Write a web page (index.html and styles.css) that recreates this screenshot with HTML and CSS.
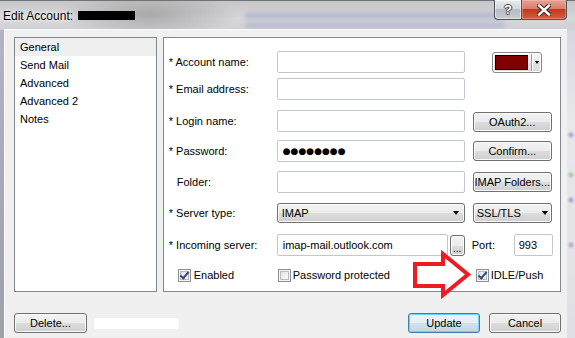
FILE: index.html
```html
<!DOCTYPE html>
<html lang="en">
<head>
    <meta charset="UTF-8">
    <meta name="viewport" content="width=device-width, initial-scale=1.0">
    <title>Edit Account</title>
    <link rel="stylesheet" href="styles.css">
</head>
<body>

    <div class="window">
        <!-- Glass title bar -->
        <div class="titlebar">
            <div class="glass-blur"></div>
            <span class="title">Edit Account:</span>
            <span class="redact-black"></span>
            <div class="caption-buttons">
                <span class="cap-btn help">?</span>
                <span class="cap-btn close">
                    <svg width="14" height="12" viewBox="0 0 14 12">
                        <path d="M2 1.5 L12 10.5 M12 1.5 L2 10.5" stroke="#3a2420" stroke-width="4.4" stroke-linecap="square"/>
                        <path d="M2 1.5 L12 10.5 M12 1.5 L2 10.5" stroke="#fff" stroke-width="2.4" stroke-linecap="square"/>
                    </svg>
                </span>
            </div>
        </div>

        <div class="frame">
            <div class="frame-left"></div>

            <div class="client">
                <div class="main">
                    <!-- Page list -->
                    <ul class="nav-list">
                        <li class="selected">General</li>
                        <li>Send Mail</li>
                        <li>Advanced</li>
                        <li>Advanced 2</li>
                        <li>Notes</li>
                    </ul>

                    <!-- General page -->
                    <div class="panel">
                        <div class="row">
                            <span class="label">* Account name:</span>
                            <input class="field" type="text">
                            <div class="color-btn">
                                <span class="swatch"></span>
                                <span class="color-sep"></span>
                                <span class="caret small"></span>
                            </div>
                        </div>
                        <div class="row tight">
                            <span class="label">* Email address:</span>
                            <input class="field" type="text">
                        </div>
                        <div class="row">
                            <span class="label">* Login name:</span>
                            <input class="field" type="text">
                            <button class="btn side-btn oauth">OAuth2...</button>
                        </div>
                        <div class="row">
                            <span class="label">* Password:</span>
                            <div class="field"><span class="dots">●●●●●●●●</span></div>
                            <button class="btn side-btn">Confirm...</button>
                        </div>
                        <div class="row">
                            <span class="label plain">Folder:</span>
                            <input class="field" type="text">
                            <button class="btn side-btn">IMAP Folders...</button>
                        </div>
                        <div class="row">
                            <span class="label">* Server type:</span>
                            <div class="btn combo"><span>IMAP</span><span class="caret"></span></div>
                            <div class="btn combo small-combo"><span>SSL/TLS</span><span class="caret"></span></div>
                        </div>
                        <div class="row loose">
                            <span class="label">* Incoming server:</span>
                            <div class="field-combo">
                                <input class="field" type="text" value="imap-mail.outlook.com">
                                <button class="btn browse">...</button>
                            </div>
                            <div class="port-cell">
                                <span class="label">Port:</span>
                                <input class="field port" type="text" value="993">
                            </div>
                        </div>
                        <div class="row checks">
                            <label class="check-item enabled"><span class="checkbox checked"></span>Enabled</label>
                            <label class="check-item protect"><span class="checkbox"></span>Password protected</label>
                            <label class="check-item idle"><span class="checkbox checked"></span>IDLE/Push</label>
                        </div>
                    </div>
                </div>

                <div class="footer">
                    <button class="btn foot-btn">Delete...</button>
                    <span class="redact-white"></span>
                    <div class="footer-right">
                        <button class="btn foot-btn default">Update</button>
                        <button class="btn foot-btn">Cancel</button>
                    </div>
                </div>

                <!-- Red callout arrow drawn over the dialog -->
                <svg class="callout-arrow" width="80" height="60" viewBox="0 0 80 60">
                    <polygon points="10,19 38,19 38,9 63,29.5 38,50 38,41 10,41" fill="none" stroke="#ed1c24" stroke-width="4"/>
                </svg>
            </div>

            <div class="frame-right"></div>
        </div>
    </div>

</body>
</html>
```

FILE: styles.css
```css
body {
    margin: 0;
    width: 575px;
    height: 338px;
    overflow: hidden;
    font-family: "Liberation Sans", Arial, sans-serif;
    font-size: 11px;
    color: #000;
}

.window {
    display: flex;
    flex-direction: column;
    height: 338px;
    background: linear-gradient(to right, #b9b8c6, #c9c9cf 30%, #c3c4ca 60%, #d3d4da);
}

/* Title bar */
.titlebar {
    position: relative;
    height: 30px;
    display: flex;
    align-items: center;
    padding-left: 3px;
    background:
        radial-gradient(ellipse 90px 22px at 150px 14px, rgba(140, 140, 140, 0.6), transparent),
        linear-gradient(to bottom, #c6c6c8, #d7d7da 60%, #cfd0d4);
    border-top: 1px solid #6f7276;
    box-sizing: border-box;
}

.glass-blur {
    position: absolute;
    left: 245px;
    top: 8px;
    width: 260px;
    height: 22px;
    background:
        linear-gradient(to bottom, transparent 10%, rgba(90, 100, 190, 0.35) 30%, transparent 50%, rgba(90, 100, 190, 0.25) 75%, transparent 95%);
    filter: blur(2px);
}

.title {
    position: relative;
    font-size: 12px;
    text-shadow: 0 0 6px #fff, 0 0 3px #fff;
}

.redact-black {
    position: relative;
    width: 57px;
    height: 9px;
    margin-left: 5px;
    background: #000;
}

.caption-buttons {
    position: relative;
    display: flex;
    margin-left: auto;
    margin-right: 8px;
    align-self: flex-start;
    margin-top: -1px;
}

.cap-btn {
    display: flex;
    justify-content: center;
    align-items: center;
    height: 20px;
    box-sizing: border-box;
    border: 1px solid #4c525a;
    border-top: none;
}

.help {
    width: 28px;
    border-radius: 0 0 0 4px;
    background: linear-gradient(to bottom, #e9ecf0, #d2d6dc 45%, #b5bbc4 50%, #c7ccd3);
    box-shadow: inset 0 0 0 1px rgba(255, 255, 255, 0.5);
    color: #fff;
    font-weight: bold;
    font-size: 13px;
    text-shadow: 1px 0 0 #3c4048, -1px 0 0 #3c4048, 0 1px 0 #3c4048, 0 -1px 0 #3c4048;
}

.close {
    width: 45px;
    border-left: none;
    border-radius: 0 0 4px 0;
    background: linear-gradient(to bottom, #e6a394, #d87e6b 45%, #c2391e 50%, #d25c40);
    box-shadow: inset 0 0 0 1px rgba(255, 200, 190, 0.4);
}

/* Frame and client area */
.frame {
    display: flex;
    flex: 1;
}

.frame-left {
    width: 4px;
    background: linear-gradient(to bottom, #b3b3c6, #a2a4b4 70%, #9ea3a8);
}

.frame-right {
    width: 8px;
    background:
        radial-gradient(circle 4px at 4px 105px, #a39ad0, transparent),
        radial-gradient(circle 4px at 4px 145px, #9bc59b, transparent),
        radial-gradient(circle 4px at 4px 170px, #9f98cc, transparent),
        radial-gradient(circle 4px at 4px 215px, #c199c8, transparent),
        linear-gradient(to bottom, #d8d6e0, #e8e8ec 30%, #e0e0e4);
}

.client {
    position: relative;
    width: 563px;
    box-sizing: border-box;
    padding: 7px 6px 0 9px;
    background: #f0f0f0;
    border-top: 1px solid #fbfbfb;
    border-left: 1px solid #fbfbfb;
    margin-top: -1px;
}

.main {
    display: flex;
    gap: 6px;
}

/* Page list */
.nav-list {
    list-style: none;
    margin: 0;
    padding: 0;
    width: 143px;
    height: 255px;
    box-sizing: border-box;
    border: 1px solid #828790;
    background: #fff;
}

.nav-list li {
    height: 18px;
    line-height: 18px;
    padding-left: 5px;
}

.nav-list li.selected {
    background: #efefef;
}

/* Settings panel */
.panel {
    width: 399px;
    height: 255px;
    box-sizing: border-box;
    border: 1px solid #828790;
    background: #fff;
    padding: 13px 0 0 5px;
}

.row {
    display: grid;
    grid-template-columns: 100px 188px 80px;
    column-gap: 8px;
    align-items: center;
    height: 22px;
    margin-top: 9px;
}

.row:first-child {
    margin-top: 0;
}

.row.tight {
    margin-top: 5px;
}

.row.loose {
    margin-top: 10px;
}

.label {
    white-space: nowrap;
}

.label.plain {
    padding-left: 8px;
}

.field {
    display: flex;
    align-items: center;
    width: 100%;
    height: 22px;
    box-sizing: border-box;
    margin: 0;
    padding: 0 5px;
    border: 1px solid #c3c7cd;
    border-radius: 2px;
    background: #fff;
    font-family: "Liberation Sans", Arial, sans-serif;
    font-size: 11px;
    color: #000;
    outline: none;
}

.dots {
    font-family: "DejaVu Sans", sans-serif;
    font-size: 9px;
    margin-top: -1px;
}

/* Buttons */
.btn {
    box-sizing: border-box;
    margin: 0;
    padding: 0;
    border: 1px solid #707070;
    border-radius: 3px;
    background: linear-gradient(to bottom, #f3f3f3, #ebebeb 50%, #dddddd 50%, #cfcfcf);
    box-shadow: inset 0 0 0 1px #fbfbfb;
    font-family: "Liberation Sans", Arial, sans-serif;
    font-size: 11px;
    color: #000;
}

.side-btn {
    width: 79px;
    height: 20px;
}

.oauth {
    margin-top: 3px;
}

.combo {
    display: flex;
    align-items: center;
    justify-content: space-between;
    height: 20px;
    padding: 0 5px 0 4px;
}

.small-combo {
    width: 79px;
    padding: 0 3px 0 3px;
}

.caret {
    width: 0;
    height: 0;
    border-left: 3px solid transparent;
    border-right: 3px solid transparent;
    border-top: 4px solid #000;
}

.caret.small {
    border-left-width: 2.5px;
    border-right-width: 2.5px;
    border-top-width: 3px;
}

.color-btn {
    display: flex;
    align-items: center;
    width: 50px;
    height: 21px;
    margin-left: 19px;
    box-sizing: border-box;
    border: 1px solid #8a8a8a;
    border-radius: 3px;
    background: linear-gradient(to bottom, #f7f7f7, #ececec 50%, #e2e2e2 50%, #dadada);
    box-shadow: inset 0 0 0 1px #fdfdfd;
}

.swatch {
    width: 33px;
    height: 15px;
    box-sizing: border-box;
    margin-left: 2px;
    border: 1px solid #000;
    background: #800000;
}

.color-sep {
    width: 1px;
    height: 17px;
    margin-left: 3px;
    margin-right: 3px;
    background: #9c9c9c;
    box-shadow: 1px 0 0 #fff;
}

.field-combo {
    display: flex;
    align-items: center;
    gap: 2px;
}

.field-combo .field {
    flex: 1;
    padding-left: 5px;
}

.browse {
    width: 15px;
    height: 21px;
    flex: none;
    font-size: 10px;
    line-height: 26px;
}

.port-cell {
    display: flex;
    align-items: center;
    justify-content: space-between;
    margin-left: -1px;
}

.port {
    width: 39px;
    padding-left: 4px;
}

/* Checkboxes */
.row.checks {
    height: 14px;
    margin-top: 12px;
}

.check-item {
    display: flex;
    align-items: center;
    gap: 3px;
    white-space: nowrap;
}

.enabled {
    margin-left: 9px;
}

.protect {
    margin-left: 1px;
    gap: 2px;
}

.idle {
    margin-left: 3px;
    gap: 2px;
}

.checkbox {
    position: relative;
    width: 13px;
    height: 13px;
    box-sizing: border-box;
    border: 1px solid #8e8f8f;
    background: linear-gradient(135deg, #d8d8d8, #f4f4f4 60%, #fefefe);
    box-shadow: inset 0 0 0 1px #f6f6f6, inset 0 0 0 2px #b8bcc2;
}

.checkbox.checked::after {
    content: "";
    position: absolute;
    left: 3px;
    top: 0px;
    width: 3px;
    height: 7px;
    border-right: 2px solid #304a7c;
    border-bottom: 2px solid #304a7c;
    transform: rotate(40deg);
}

/* Footer */
.footer {
    display: flex;
    align-items: center;
    margin-top: 21px;
}

.foot-btn {
    width: 73px;
    height: 20px;
}

.redact-white {
    width: 85px;
    height: 11px;
    margin-left: 7px;
    margin-top: 1px;
    background: #fff;
    border-radius: 3px;
    filter: blur(0.6px);
}

.footer-right {
    display: flex;
    gap: 9px;
    margin-left: auto;
}

.footer-right .foot-btn {
    width: 72px;
}

.foot-btn.default {
    border-color: #3c7fb1;
    background: linear-gradient(to bottom, #eef5f9, #e3edf3 50%, #d3e1ea 50%, #c6d6e2);
    box-shadow: inset 0 0 0 1px #6fd0f5;
}

/* Callout arrow */
.callout-arrow {
    position: absolute;
    left: 400px;
    top: 215px;
    overflow: visible;
}
```
